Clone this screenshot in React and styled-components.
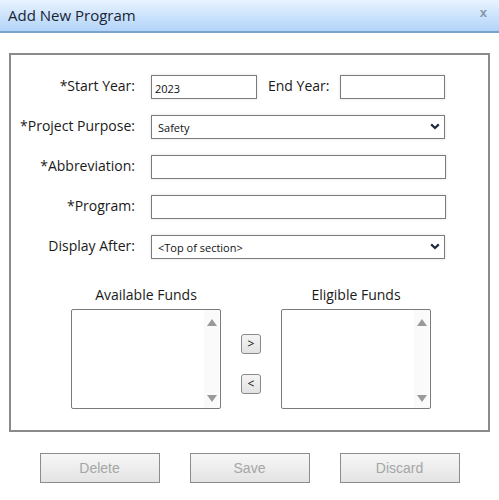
import React from 'react';
import styled, { createGlobalStyle } from 'styled-components';

const GlobalStyle = createGlobalStyle`
  html, body {
    margin: 0;
    padding: 0;
    background: #ffffff;
  }
  body {
    font-family: 'Open Sans', 'Noto Sans', sans-serif;
    color: #1a1a1a;
  }
  * {
    box-sizing: border-box;
  }
`;

const Chevron = () => (
  <svg width="10" height="7" viewBox="0 0 10 7">
    <path d="M1.2 1.4 L5 5 L8.8 1.4" fill="none" stroke="#1d2a3d" strokeWidth="2.2" />
  </svg>
);

const Triangle = ({ down }) => (
  <svg width="10" height="7" viewBox="0 0 10 7">
    <path d={down ? 'M0 0 L10 0 L5 7 Z' : 'M5 0 L10 7 L0 7 Z'} fill="#9a9a9a" />
  </svg>
);

const FundsList = () => (
  <ListBox>
    <ListItems />
    <ScrollTrack>
      <Triangle />
      <Triangle down />
    </ScrollTrack>
  </ListBox>
);

export default function App() {
  return (
    <>
      <GlobalStyle />
      <Dialog>
        <TitleBar>
          <Title>Add New Program</Title>
          <CloseX>x</CloseX>
        </TitleBar>

        <Body>
          <FormBox>
            <Row>
              <Label>*Start Year:</Label>
              <YearGroup>
                <TextInput width="106px" defaultValue="2023" />
                <InlineLabel>End Year:</InlineLabel>
                <TextInput width="105px" />
              </YearGroup>
            </Row>

            <Row>
              <Label>*Project Purpose:</Label>
              <SelectWrap>
                <Select defaultValue="Safety">
                  <option>Safety</option>
                </Select>
                <ChevronSpot>
                  <Chevron />
                </ChevronSpot>
              </SelectWrap>
            </Row>

            <Row>
              <Label>*Abbreviation:</Label>
              <TextInput width="295px" />
            </Row>

            <Row>
              <Label>*Program:</Label>
              <TextInput width="295px" />
            </Row>

            <Row>
              <Label>Display After:</Label>
              <SelectWrap>
                <Select defaultValue="top">
                  <option value="top">&lt;Top of section&gt;</option>
                </Select>
                <ChevronSpot>
                  <Chevron />
                </ChevronSpot>
              </SelectWrap>
            </Row>

            <Funds>
              <FundColumn>
                <FundTitle>Available Funds</FundTitle>
                <FundsList />
              </FundColumn>

              <MoveButtons>
                <MoveButton>&gt;</MoveButton>
                <MoveButton>&lt;</MoveButton>
              </MoveButtons>

              <FundColumn>
                <FundTitle>Eligible Funds</FundTitle>
                <FundsList />
              </FundColumn>
            </Funds>
          </FormBox>

          <Actions>
            <ActionButton disabled>Delete</ActionButton>
            <ActionButton disabled>Save</ActionButton>
            <ActionButton disabled>Discard</ActionButton>
          </Actions>
        </Body>
      </Dialog>
    </>
  );
}

const Dialog = styled.div`
  width: 499px;
  height: 500px;
  background: #ffffff;
`;

const TitleBar = styled.div`
  height: 33px;
  display: flex;
  align-items: center;
  justify-content: space-between;
  padding: 0 12px 2px 8px;
  background: linear-gradient(to bottom, #e9f3fe 0%, #c9e2fc 55%, #b3d4f9 100%);
  border-bottom: 2px solid #7aa3cc;
`;

const Title = styled.h1`
  margin: 0;
  font-family: 'Open Sans', 'Noto Sans', sans-serif;
  font-size: 15px;
  font-weight: 400;
  color: #1b2433;
`;

const CloseX = styled.span`
  font-family: 'Liberation Sans', Arial, sans-serif;
  font-size: 13px;
  font-weight: 700;
  color: #8797ab;
  margin-top: -4px;
`;

const Body = styled.div`
  padding: 20px 9px 0 9px;
`;

const FormBox = styled.div`
  height: 379px;
  border: 2px solid #8a8a8a;
  padding: 20px 0 0 0;
  display: flex;
  flex-direction: column;
  gap: 16px;
`;

const Row = styled.div`
  display: flex;
  align-items: center;
  gap: 16px;
  height: 24px;
`;

const Label = styled.label`
  width: 124px;
  text-align: right;
  font-size: 14px;
  color: #1a1a1a;
  white-space: nowrap;
  margin-top: -3px;
`;

const InlineLabel = styled(Label)`
  width: auto;
`;

const YearGroup = styled.div`
  display: flex;
  align-items: center;
  gap: 11px;
`;

const TextInput = styled.input`
  width: ${(p) => p.width};
  height: 24px;
  padding: 2px 3px 0;
  border: 1px solid #7b7b7b;
  box-shadow: 0 0 3px rgba(0, 0, 0, 0.12);
  font-family: 'Open Sans', 'Noto Sans', sans-serif;
  font-size: 11px;
  color: #111;
  outline: none;
`;

const SelectWrap = styled.div`
  position: relative;
  width: 294px;
  height: 24px;
`;

const Select = styled.select`
  width: 100%;
  height: 100%;
  appearance: none;
  -webkit-appearance: none;
  padding: 1px 6px 0;
  border: 1px solid #7b7b7b;
  border-radius: 0;
  background: #ffffff;
  box-shadow: 0 0 3px rgba(0, 0, 0, 0.12);
  font-family: 'Open Sans', 'Noto Sans', sans-serif;
  font-size: 11px;
  color: #111;
  outline: none;
`;

const ChevronSpot = styled.span`
  position: absolute;
  right: 5px;
  top: 8px;
  display: flex;
  pointer-events: none;
`;

const Funds = styled.div`
  display: flex;
  justify-content: center;
  align-items: flex-end;
  gap: 20px;
  margin-top: 11px;
  padding-left: 3px;
`;

const FundColumn = styled.div`
  display: flex;
  flex-direction: column;
  align-items: center;
  gap: 5px;
`;

const FundTitle = styled.div`
  font-size: 14px;
  color: #1a1a1a;
  line-height: 18px;
`;

const ListBox = styled.div`
  width: 150px;
  height: 100px;
  display: flex;
  border: 1px solid #7b7b7b;
  border-radius: 2px;
  background: #ffffff;
`;

const ListItems = styled.div`
  flex: 1;
`;

const ScrollTrack = styled.div`
  width: 15px;
  margin-right: 1px;
  display: flex;
  flex-direction: column;
  justify-content: space-between;
  align-items: center;
  padding: 9px 0 6px;
  background: #fafafa;
`;

const MoveButtons = styled.div`
  display: flex;
  flex-direction: column;
  gap: 20px;
  margin-bottom: 15px;
`;

const MoveButton = styled.button`
  width: 20px;
  height: 20px;
  padding: 0;
  border: 1px solid #8a8a8a;
  border-radius: 3px;
  background: linear-gradient(to bottom, #f4f4f4, #e2e2e2);
  font-family: 'Open Sans', 'Noto Sans', sans-serif;
  font-size: 12px;
  color: #111;
  line-height: 1;
`;

const Actions = styled.div`
  display: flex;
  justify-content: center;
  gap: 30px;
  margin-top: 21px;
`;

const ActionButton = styled.button`
  width: 120px;
  height: 30px;
  border: 1px solid #8c8c8c;
  border-radius: 0;
  background: linear-gradient(to bottom, #f7f7f7, #e3e3e3);
  font-family: 'Liberation Sans', Arial, sans-serif;
  font-size: 14px;
  color: #a6a6a6;
`;
